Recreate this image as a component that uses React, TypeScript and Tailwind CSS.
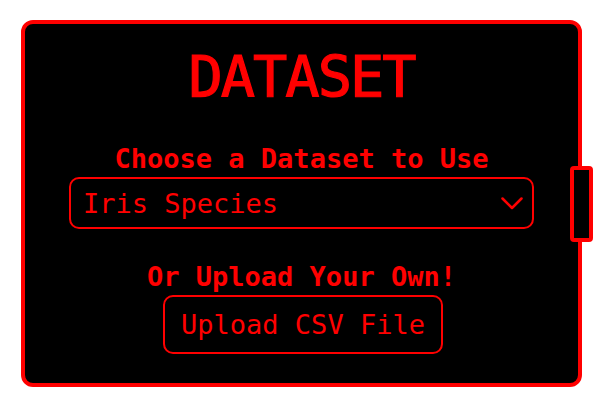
import React from 'react';

const Chevron: React.FC = () => (
  <svg width="22" height="13" viewBox="0 0 22 13" fill="none">
    <polyline points="1.5,1.5 11,11 20.5,1.5" stroke="#ff0000" strokeWidth="2.5" strokeLinecap="round" strokeLinejoin="round" />
  </svg>
);

const DatasetPanel: React.FC = () => {
  return (
    <div className="relative w-[561px] h-[367px] bg-black border-4 border-[#ff0000] rounded-[12px] flex flex-col items-center pt-[25px] text-[#ff0000] font-['DejaVu_Sans_Mono',monospace]">
      <h1 className="text-[57px] leading-[57px] tracking-[-2px] font-normal [-webkit-text-stroke:1.2px_#ff0000]">DATASET</h1>

      <label className="mt-[37px] text-[27px] leading-[31px] font-bold">Choose a Dataset to Use</label>
      <div className="mt-[3px] w-[465px] h-[52px] border-2 border-[#ff0000] rounded-[10px] flex items-center justify-between pl-[12px] pr-[9px]">
        <span className="text-[27px] leading-[31px]">Iris Species</span>
        <Chevron />
      </div>

      <p className="mt-[32px] text-[27px] leading-[31px] font-bold">Or Upload Your Own!</p>
      <button className="mt-[3px] ml-[3px] w-[280px] h-[59px] border-2 border-[#ff0000] rounded-[10px] text-[27px] leading-[31px] text-[#ff0000]">
        Upload CSV File
      </button>

      {/* resize handle on the right edge */}
      <div className="absolute left-[545px] top-[142px] w-[23px] h-[76px] bg-black border-4 border-[#ff0000] rounded-[4px]" />
    </div>
  );
};

export default function App() {
  return (
    <div className="w-[605px] h-[412px] bg-white pt-[20px] pl-[21px]">
      <DatasetPanel />
    </div>
  );
}
